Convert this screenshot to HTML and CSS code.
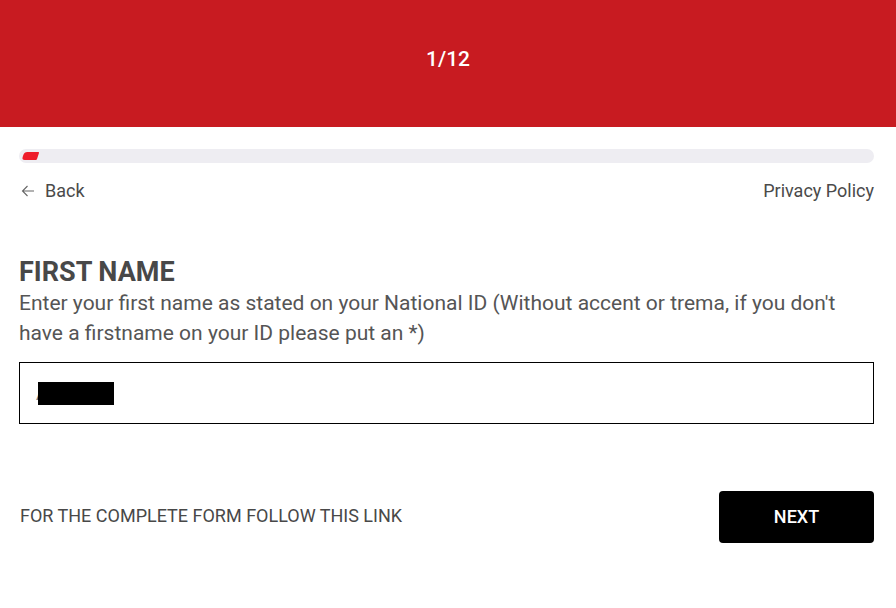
FILE: index.html
```html
<!DOCTYPE html>
<html lang="en">
<head>
<meta charset="utf-8">
<title>Form</title>
<link rel="stylesheet" href="styles.css">
</head>
<body>
<header class="top">
  <span class="step">1/12</span>
</header>
<main class="page">
  <div class="progress"><div class="progress-fill"></div></div>
  <nav class="links">
    <a class="back" href="#">
      <svg class="arrow" width="14" height="12" viewBox="0 0 14 12" aria-hidden="true"><path d="M13 6H1.5M6.5 1L1.5 6l5 5" fill="none" stroke="#666" stroke-width="1.1"/></svg>
      Back
    </a>
    <a class="privacy" href="#">Privacy Policy</a>
  </nav>
  <section class="question">
    <h1 class="title">FIRST NAME</h1>
    <p class="desc">Enter your first name as stated on your National ID (Without accent or trema, if you don't have a firstname on your ID please put an *)</p>
    <div class="field">
      <span class="value">A<span class="redact"></span></span>
    </div>
  </section>
  <footer class="actions">
    <a class="full" href="#">FOR THE COMPLETE FORM FOLLOW THIS LINK</a>
    <button class="next">NEXT</button>
  </footer>
</main>
</body>
</html>
```
FILE: styles.css
```css
* { box-sizing: border-box; }
html, body { margin: 0; padding: 0; background: #fff; }
body { font-family: Roboto, "Liberation Sans", sans-serif; color: #4a4a4a; }
a { color: inherit; text-decoration: none; }

.top {
  height: 127px;
  background: #c81b21;
  display: flex;
  align-items: center;
  justify-content: center;
  padding-bottom: 10px;
}
.step { color: #fff; font-size: 21px; font-weight: 500; }

.page { padding: 22px 22px 0 19px; }

.progress {
  height: 14px;
  border-radius: 7px;
  background: #eeedf2;
  padding: 3px;
}
.progress-fill {
  width: 15px;
  height: 8px;
  background: #ee1d2b;
  border-radius: 3px 1px 1px 3px;
  transform: skewX(-18deg);
  margin-left: 1px;
}

.links {
  display: flex;
  justify-content: space-between;
  align-items: center;
  margin-top: 17px;
  font-size: 18px;
  line-height: 22px;
  color: #4a4a4a;
}
.back { display: flex; align-items: center; gap: 10px; padding-left: 2px; }
.arrow { display: block; }

.question { margin-top: 55px; }
.title { margin: 0; font-size: 27px; font-weight: 700; color: #484848; line-height: 30px; }
.desc { margin: 1px 0 0; font-size: 21px; line-height: 30px; color: #555; }

.field {
  margin-top: 14px;
  height: 62px;
  border: 1px solid #000;
  display: flex;
  align-items: center;
  padding-left: 16px;
}
.value { position: relative; font-size: 18px; color: #777; }
.redact {
  position: absolute;
  left: 2px;
  top: -1px;
  width: 76px;
  height: 23px;
  background: #000;
}

.actions {
  margin-top: 67px;
  display: flex;
  justify-content: space-between;
  align-items: center;
}
.full { font-size: 18px; color: #484848; padding-left: 1px; margin-bottom: 3px; }
.next {
  width: 155px;
  height: 52px;
  background: #000;
  color: #fff;
  border: 0;
  border-radius: 4px;
  font-family: Roboto, "Liberation Sans", sans-serif;
  font-size: 18px;
  font-weight: 500;
  padding-bottom: 2px;
}
```
